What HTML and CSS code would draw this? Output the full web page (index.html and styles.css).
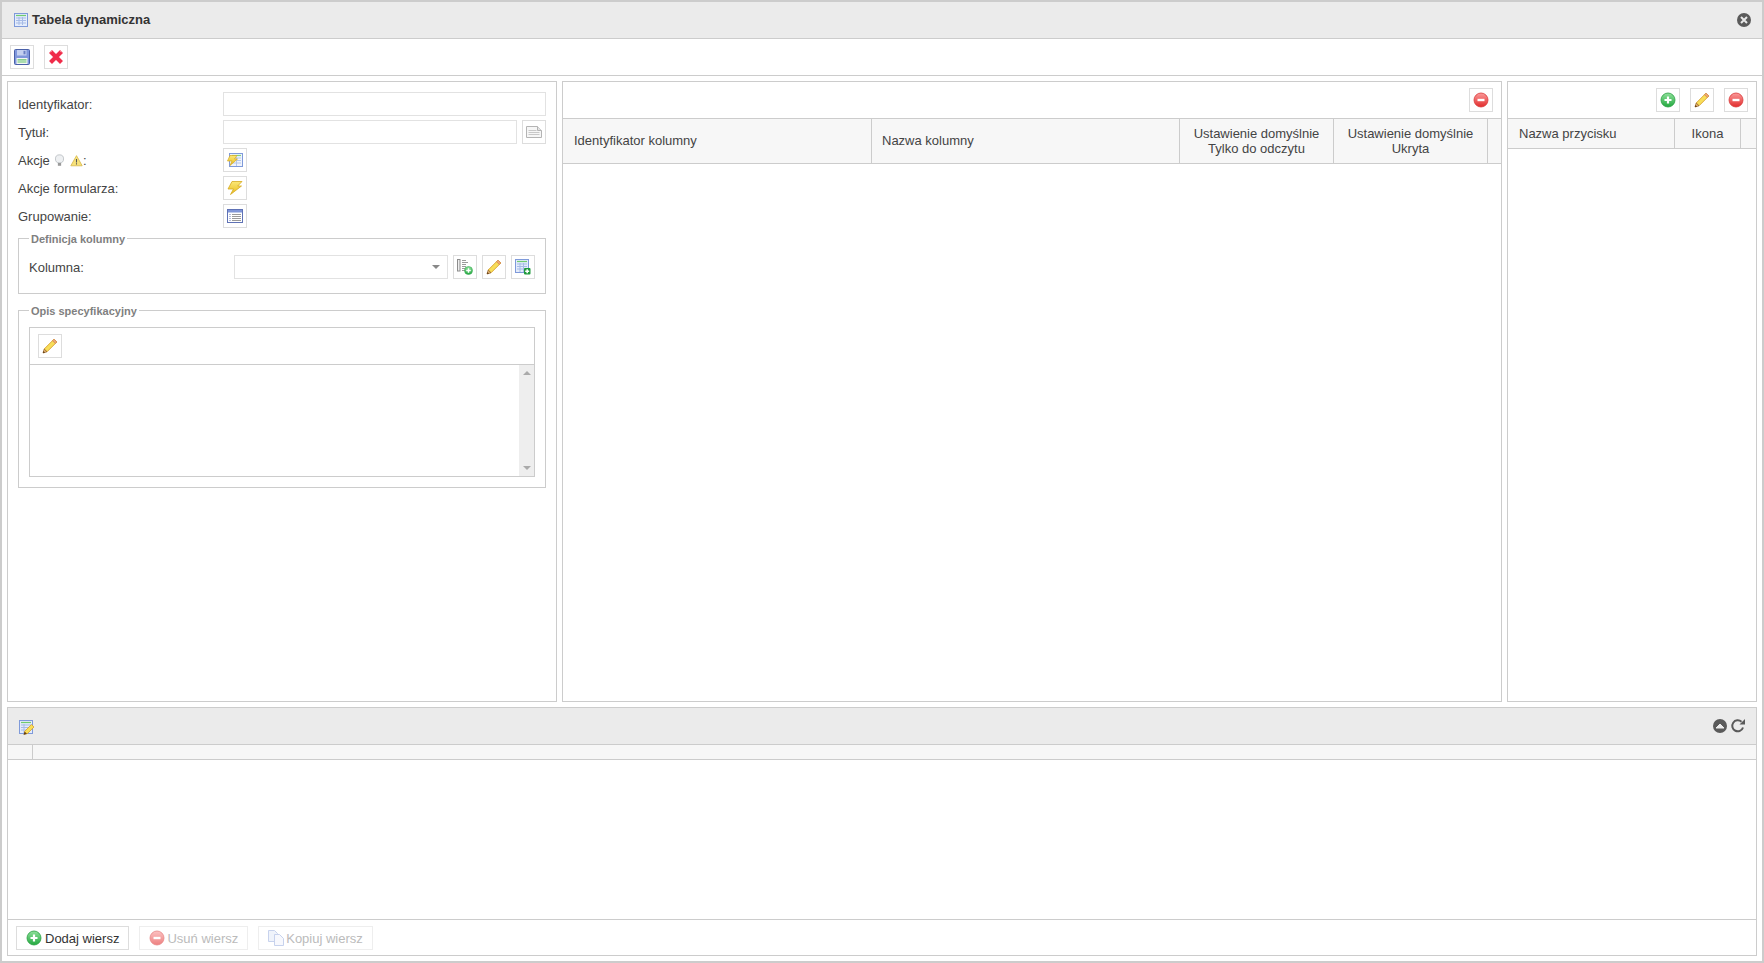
FILE: index.html
```html
<!DOCTYPE html>
<html lang="pl">
<head>
    <meta charset="UTF-8">
    <title>Tabela dynamiczna</title>
    <link rel="stylesheet" href="styles.css">
</head>
<body>

<!-- zestaw ikon 16x16 -->
<svg class="sprite" xmlns="http://www.w3.org/2000/svg">
    <defs>
        <linearGradient id="gGreen" x1="0" y1="0" x2="0" y2="1"><stop offset="0" stop-color="#8fe09a"/><stop offset="1" stop-color="#22a83f"/></linearGradient>
        <linearGradient id="gRed" x1="0" y1="0" x2="0" y2="1"><stop offset="0" stop-color="#fb9a9a"/><stop offset="1" stop-color="#e22c2c"/></linearGradient>
        <linearGradient id="gBolt" x1="0" y1="0" x2="0" y2="1"><stop offset="0" stop-color="#fbe878"/><stop offset="1" stop-color="#e8bb1c"/></linearGradient>
    </defs>
    <symbol id="i-table" viewBox="0 0 16 16">
        <rect x="1.5" y="1.5" width="13" height="13" fill="#e4ecfb" stroke="#7f9ada"/>
        <path d="M3 3.5h10" stroke="#6fcb6f" stroke-width="1.2"/>
        <path d="M3 6h10M3 8.5h10M3 11h10M6 5v8M9.5 5v8" stroke="#a6bbe6" stroke-width="1"/>
    </symbol>
    <symbol id="i-save" viewBox="0 0 16 16">
        <path d="M.5 1.500a1 1 0 0 1 1-1h13a1 1 0 0 1 1 1v13a1 1 0 0 1-1 1h-13a1 1 0 0 1-1-1z" fill="#7f97dc" stroke="#4a60a8"/>
        <rect x="3" y="1" width="9.500" height="5.500" fill="#c4d0f0"/>
        <rect x="9.500" y="1.800" width="2" height="3.500" fill="#6a80c4"/>
        <rect x="2.500" y="9" width="11" height="6" fill="#f4f6f4"/>
        <path d="M3.500 10.800h9M3.500 13h9" stroke="#63c46b" stroke-width="1.200"/>
    </symbol>
    <symbol id="i-cross" viewBox="0 0 16 16">
        <path d="M2.500 2.500l11 11M13.500 2.500l-11 11" stroke="#f02c4a" stroke-width="4.200"/>
        <path d="M2 3l2-1M12 2l2 1" stroke="#fb9aa8" stroke-width="1"/>
    </symbol>
    <symbol id="i-bolt" viewBox="0 0 16 16">
        <path d="M5 1.500h10l-4.300 4.500h3.800L3.500 14.500l3-5.500H1z" fill="url(#gBolt)" stroke="#d5a920" stroke-width=".8"/>
    </symbol>
    <symbol id="i-tablebolt" viewBox="0 0 16 16">
        <rect x="2.500" y="1.500" width="13" height="13" fill="#f0f4fc" stroke="#7f9ada"/>
        <path d="M5 3.500h9" stroke="#7fd27f" stroke-width="1.200"/>
        <path d="M5 6h9M5 8.500h9M5 11h9M9.500 5v9" stroke="#b3c6ea"/>
        <path d="M3 3.500h7L7.500 7h3L3 13.500l2-4.500H.500z" fill="url(#gBolt)" stroke="#d5a920" stroke-width=".7"/>
    </symbol>
    <symbol id="i-list" viewBox="0 0 16 16">
        <rect x=".5" y="1.500" width="15" height="13" fill="#fff" stroke="#5f72b5"/>
        <rect x="1" y="2" width="14" height="2.500" fill="#7f95d8"/>
        <path d="M2.500 6.500h1M2.500 8.500h1M2.500 10.500h1M2.500 12.500h1" stroke="#6478bb"/>
        <path d="M5 6.500h9M5 8.500h9M5 10.500h9M5 12.500h9" stroke="#9a9a9a"/>
    </symbol>
    <symbol id="i-doc" viewBox="0 0 16 16">
        <path d="M.5 2.500h11l4 4v7h-15z" fill="#f6f6f6" stroke="#b4b4b4"/>
        <path d="M11.500 2.500v4h4" fill="#e4e4e4" stroke="#b4b4b4"/>
        <path d="M2.500 6.500h8M2.500 8.500h11M2.500 10.500h11" stroke="#c8c8c8"/>
    </symbol>
    <symbol id="i-pencil" viewBox="0 0 16 16">
        <path d="M12 1.200l2.800 2.800L5 13.800 2.200 11z" fill="#f8de58" stroke="#d8a02e" stroke-width=".9"/>
        <path d="M12 1.200l2.800 2.800-1.500 1.500-2.800-2.800z" fill="#f0a878" stroke="#d08a50" stroke-width=".8"/>
        <path d="M2.200 11L5 13.800l-4 1.200z" fill="#e8b878" stroke="#8a5a1e" stroke-width=".7"/>
        <path d="M1 15l.6-2 1.400 1.400z" fill="#5a3208"/>
    </symbol>
    <symbol id="i-plus" viewBox="0 0 16 16">
        <circle cx="8" cy="8" r="7" fill="url(#gGreen)" stroke="#2aa043" stroke-width=".8"/>
        <path d="M8 4.500v7M4.500 8h7" stroke="#fff" stroke-width="2.200"/>
    </symbol>
    <symbol id="i-minus" viewBox="0 0 16 16">
        <circle cx="8" cy="8" r="7" fill="url(#gRed)" stroke="#d93a3a" stroke-width=".8"/>
        <path d="M4.500 8h7" stroke="#fff" stroke-width="2.400"/>
    </symbol>
    <symbol id="i-coladd" viewBox="0 0 16 16">
        <rect x=".5" y=".5" width="2.500" height="11.500" fill="#eee" stroke="#8c8c8c"/>
        <path d="M5 1.500h4M5 3.500h6M5 5.500h4M5 7.500h4M5 9.500h3M5 11.500h3" stroke="#9a9a9a"/>
        <circle cx="11.500" cy="11.500" r="4" fill="url(#gGreen)" stroke="#35a852" stroke-width=".6"/>
        <path d="M11.500 9.200v4.600M9.200 11.500h4.600" stroke="#fff" stroke-width="1.500"/>
    </symbol>
    <symbol id="i-tableadd" viewBox="0 0 16 16">
        <rect x=".5" y=".5" width="13" height="13" fill="#e4ecfb" stroke="#7f9ada"/>
        <path d="M2 2.500h10" stroke="#6fcb6f" stroke-width="1.200"/>
        <path d="M2 5h10M2 7.500h10M2 10h10M5 4v9M8.500 4v9" stroke="#a6bbe6"/>
        <rect x="9" y="9" width="6.500" height="6.500" rx="1" fill="#1f9a3c"/>
        <path d="M12.200 10.200v4M10.200 12.200h4" stroke="#fff" stroke-width="1.500"/>
    </symbol>
    <symbol id="i-tableedit" viewBox="0 0 16 16">
        <rect x=".5" y=".5" width="13" height="13" fill="#e4ecfb" stroke="#7f9ada"/>
        <path d="M2 2.500h10" stroke="#6fcb6f" stroke-width="1.200"/>
        <path d="M2 5h10M2 7.500h10M2 10h10M5 4v9" stroke="#a6bbe6"/>
        <path d="M12.500 4.500l2.500 2.500-7 7-2.500-2.500z" fill="#f8de58" stroke="#d8a02e" stroke-width=".8"/>
        <path d="M5.500 11.500L8 14l-3.500 1z" fill="#6a4208"/>
    </symbol>
    <symbol id="i-copy" viewBox="0 0 16 16">
        <path d="M.5.5h6l3 3v8h-9z" fill="#e6ecfa" stroke="#a3b5e2"/>
        <path d="M6.500 4.500h5l4 4v7h-9z" fill="#f2f5fc" stroke="#a3b5e2"/>
    </symbol>
    <symbol id="i-bulb" viewBox="0 0 16 16">
        <circle cx="8" cy="6" r="5" fill="#eef0f2" stroke="#b8bcc0"/>
        <rect x="6" y="11" width="4" height="3.500" fill="#9a9a9a"/>
    </symbol>
    <symbol id="i-warn" viewBox="0 0 16 16">
        <path d="M8 2l7 12.500H1z" fill="#f7e27a" stroke="#d8b84a"/>
        <path d="M8 6v4.500M8 11.500v1.500" stroke="#555" stroke-width="1.300"/>
    </symbol>
    <symbol id="i-close" viewBox="0 0 16 16">
        <circle cx="8" cy="8" r="7" fill="#5a5a5a"/>
        <path d="M5 5l6 6M11 5l-6 6" stroke="#e8e8e8" stroke-width="2"/>
    </symbol>
    <symbol id="i-up" viewBox="0 0 16 16">
        <circle cx="8" cy="8" r="7" fill="#5a5a5a"/>
        <path d="M4 10l4-4 4 4z" fill="#ebebeb" stroke="#ebebeb"/>
    </symbol>
    <symbol id="i-refresh" viewBox="0 0 16 16">
        <path d="M13 9.500A5.500 5.500 0 1 1 11.500 3.800" fill="none" stroke="#5a5a5a" stroke-width="2"/>
        <path d="M9.500 6.500H15V1z" fill="#5a5a5a"/>
    </symbol>
</svg>

<div class="window">
    <div class="title-bar">
        <svg class="ico"><use href="#i-table"/></svg>
        <span class="title">Tabela dynamiczna</span>
        <svg class="ico close"><use href="#i-close"/></svg>
    </div>
    <div class="toolbar">
        <span class="btn"><svg class="ico"><use href="#i-save"/></svg></span>
        <span class="btn"><svg class="ico"><use href="#i-cross"/></svg></span>
    </div>

    <div class="content">
        <div class="top-panels">
            <div class="panel left">
                <div class="form-grid">
                    <label>Identyfikator:</label>
                    <div class="field"><span class="input"></span></div>
                    <label>Tytuł:</label>
                    <div class="field"><span class="input"></span><span class="btn"><svg class="ico"><use href="#i-doc"/></svg></span></div>
                    <label class="label-icons">Akcje <svg class="mini"><use href="#i-bulb"/></svg> <svg class="mini"><use href="#i-warn"/></svg>:</label>
                    <div class="field"><span class="btn"><svg class="ico"><use href="#i-tablebolt"/></svg></span></div>
                    <label>Akcje formularza:</label>
                    <div class="field"><span class="btn"><svg class="ico"><use href="#i-bolt"/></svg></span></div>
                    <label>Grupowanie:</label>
                    <div class="field"><span class="btn"><svg class="ico"><use href="#i-list"/></svg></span></div>
                </div>

                <fieldset class="group group-col">
                    <legend>Definicja kolumny</legend>
                    <div class="col-row">
                        <label>Kolumna:</label>
                        <span class="select"><i class="caret"></i></span>
                        <span class="btn"><svg class="ico"><use href="#i-coladd"/></svg></span>
                        <span class="btn"><svg class="ico"><use href="#i-pencil"/></svg></span>
                        <span class="btn"><svg class="ico"><use href="#i-tableadd"/></svg></span>
                    </div>
                </fieldset>

                <fieldset class="group group-desc">
                    <legend>Opis specyfikacyjny</legend>
                    <div class="editor">
                        <div class="editor-bar">
                            <span class="btn"><svg class="ico"><use href="#i-pencil"/></svg></span>
                        </div>
                        <div class="editor-body">
                            <div class="scroll"><i class="arr-up"></i><i class="arr-down"></i></div>
                        </div>
                    </div>
                </fieldset>
            </div>

            <div class="panel middle">
                <div class="panel-bar">
                    <span class="btn"><svg class="ico"><use href="#i-minus"/></svg></span>
                </div>
                <div class="thead thead-mid">
                    <div class="th w-id">Identyfikator kolumny</div>
                    <div class="th w-name">Nazwa kolumny</div>
                    <div class="th w-def center">Ustawienie domyślnie<br>Tylko do odczytu</div>
                    <div class="th w-def center">Ustawienie domyślnie<br>Ukryta</div>
                </div>
            </div>

            <div class="panel right">
                <div class="panel-bar gap">
                    <span class="btn"><svg class="ico"><use href="#i-plus"/></svg></span>
                    <span class="btn"><svg class="ico"><use href="#i-pencil"/></svg></span>
                    <span class="btn"><svg class="ico"><use href="#i-minus"/></svg></span>
                </div>
                <div class="thead thead-right">
                    <div class="th w-btn">Nazwa przycisku</div>
                    <div class="th w-icon center">Ikona</div>
                </div>
            </div>
        </div>

        <div class="panel bottom">
            <div class="bottom-bar">
                <svg class="ico low"><use href="#i-tableedit"/></svg>
                <span class="bar-right">
                    <svg class="ico"><use href="#i-up"/></svg>
                    <svg class="ico"><use href="#i-refresh"/></svg>
                </span>
            </div>
            <div class="grid-head"><div class="grid-first"></div></div>
            <div class="grid-body"></div>
            <div class="grid-foot">
                <span class="txt-btn"><svg class="ico"><use href="#i-plus"/></svg>Dodaj wiersz</span>
                <span class="txt-btn off"><svg class="ico"><use href="#i-minus"/></svg>Usuń wiersz</span>
                <span class="txt-btn off"><svg class="ico"><use href="#i-copy"/></svg>Kopiuj wiersz</span>
            </div>
        </div>
    </div>
</div>

</body>
</html>
```

FILE: styles.css
```css
*{
    margin: 0;
    padding: 0;
    box-sizing: border-box;
}

html, body{
    height: 100%;
    overflow: hidden;
    background: #fff;
}

body{
    font-family: "Liberation Sans", Arial, sans-serif;
    font-size: 13px;
    color: #444;
}

/* display:none psuje gradienty w symbolach */
.sprite{
    position: absolute;
    width: 0;
    height: 0;
}

.ico{
    width: 16px;
    height: 16px;
    display: block;
    flex: none;
}

.mini{
    width: 13px;
    height: 13px;
    display: inline-block;
    vertical-align: -2px;
}

.window{
    height: 963px;
    border: 2px solid #ccc;
    display: flex;
    flex-direction: column;
}

.title-bar{
    height: 37px;
    flex: none;
    background: #ebebeb;
    border-bottom: 1px solid #ccc;
    display: flex;
    align-items: center;
    padding: 0 10px 0 11px;
}

.title{
    font-weight: bold;
    color: #333;
    margin-left: 3px;
    margin-bottom: 2px;
}

.close{
    margin-left: auto;
}

.toolbar{
    height: 37px;
    flex: none;
    border-bottom: 1px solid #ccc;
    display: flex;
    align-items: center;
    padding: 0 8px;
    gap: 10px;
}

.btn{
    width: 24px;
    height: 24px;
    flex: none;
    border: 1px solid #ddd;
    background: #fff;
    display: flex;
    align-items: center;
    justify-content: center;
}

.content{
    flex: 1;
    min-height: 0;
    padding: 5px;
    display: flex;
    flex-direction: column;
    gap: 5px;
}

.top-panels{
    height: 621px;
    flex: none;
    display: flex;
    gap: 5px;
}

.panel{
    border: 1px solid #ccc;
    background: #fff;
}

.left{
    width: 550px;
    padding: 10px;
}

.middle{
    width: 940px;
}

.right{
    flex: 1;
}

/* formularz */
.form-grid{
    display: grid;
    grid-template-columns: 205px 1fr;
    row-gap: 4px;
    align-items: center;
}

.field{
    display: flex;
    gap: 5px;
}

.input{
    flex: 1;
    height: 24px;
    border: 1px solid #e2e2e2;
}

.group{
    border: 1px solid #ccc;
    padding: 0 10px;
}

.group legend{
    padding: 2px 2px 0;
    font-size: 11px;
    line-height: 13px;
    font-weight: bold;
    color: #808080;
}

.group-col{
    margin-top: 3px;
    padding-top: 9px;
    padding-bottom: 14px;
}

.group-desc{
    margin-top: 9px;
    padding-top: 9px;
    padding-bottom: 10px;
}

.col-row{
    display: flex;
    align-items: center;
    gap: 5px;
}

.col-row label{
    width: 200px;
}

.select{
    width: 214px;
    height: 24px;
    border: 1px solid #e2e2e2;
    position: relative;
}

.caret{
    position: absolute;
    right: 7px;
    top: 9px;
    border-left: 4px solid transparent;
    border-right: 4px solid transparent;
    border-top: 4px solid #888;
}

.editor{
    border: 1px solid #ccc;
}

.editor-bar{
    height: 37px;
    border-bottom: 1px solid #ccc;
    padding: 6px 8px;
}

.editor-body{
    height: 111px;
    display: flex;
    justify-content: flex-end;
}

.scroll{
    width: 15px;
    background: #eee;
    position: relative;
}

.arr-up, .arr-down{
    position: absolute;
    left: 4px;
    border-left: 4px solid transparent;
    border-right: 4px solid transparent;
}

.arr-up{
    top: 6px;
    border-bottom: 4px solid #aaa;
}

.arr-down{
    bottom: 6px;
    border-top: 4px solid #aaa;
}

/* tabele */
.panel-bar{
    height: 37px;
    border-bottom: 1px solid #ccc;
    display: flex;
    align-items: center;
    justify-content: flex-end;
    padding: 0 8px;
}

.panel-bar.gap{
    gap: 10px;
}

.thead{
    display: flex;
    background: #f7f7f7;
    border-bottom: 1px solid #ccc;
}

.thead-mid{
    height: 45px;
}

.thead-right{
    height: 30px;
}

.th{
    border-right: 1px solid #ccc;
    padding: 0 11px;
    line-height: 15px;
    display: flex;
    align-items: center;
}

.center{
    justify-content: center;
    text-align: center;
}

.w-id{
    width: 309px;
    padding-bottom: 2px;
}

.w-name{
    width: 308px;
    padding-left: 10px;
    padding-bottom: 2px;
}

.w-def{
    width: 154px;
    padding: 0;
}

.w-btn{
    width: 167px;
}

.w-icon{
    width: 66px;
    padding: 0;
}

/* dolny panel */
.bottom{
    flex: 1;
    min-height: 0;
    display: flex;
    flex-direction: column;
}

.bottom-bar{
    height: 37px;
    flex: none;
    background: #ebebeb;
    border-bottom: 1px solid #ccc;
    display: flex;
    align-items: center;
    justify-content: space-between;
    padding: 0 10px 0 11px;
}

.bottom-bar .low{
    margin-top: 3px;
}

.bar-right{
    display: flex;
    gap: 2px;
}

.grid-head{
    height: 15px;
    flex: none;
    background: #f7f7f7;
    border-bottom: 1px solid #ccc;
}

.grid-first{
    width: 25px;
    height: 100%;
    border-right: 1px solid #ccc;
}

.grid-body{
    flex: 1;
}

.grid-foot{
    height: 36px;
    flex: none;
    border-top: 1px solid #ccc;
    display: flex;
    align-items: flex-start;
    gap: 10px;
    padding: 6px 8px 0;
}

.txt-btn{
    height: 24px;
    border: 1px solid #ddd;
    display: flex;
    align-items: center;
    gap: 3px;
    padding: 0 9px;
    color: #333;
}

.txt-btn.off{
    border-color: #eee;
    color: #bbb;
    gap: 2px;
}

.txt-btn.off .ico{
    opacity: .6;
}
```
